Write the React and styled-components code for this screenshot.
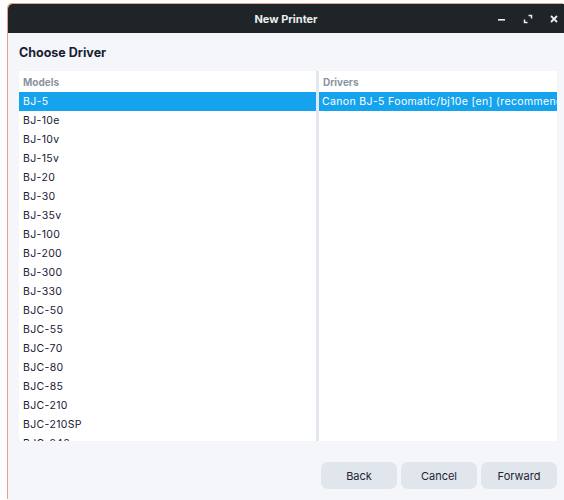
import React, { useState } from 'react';
import styled, { createGlobalStyle } from 'styled-components';

const GlobalStyle = createGlobalStyle`
  html, body {
    margin: 0;
    padding: 0;
    background: #ffffff;
    font-family: Inter, "Noto Sans", sans-serif;
  }
`;

const Desktop = styled.div`
  position: relative;
  width: 564px;
  height: 500px;
  padding: 4px 0 0 8px;
  box-sizing: border-box;
  overflow: hidden;
`;

const Window = styled.div`
  width: 556px;
  height: 496px;
  display: flex;
  flex-direction: column;
  background: #f5f6fa;
  border-top-left-radius: 5px;
  overflow: hidden;
  box-shadow: -1px -1px 0 #e9a088;
`;

const TitleBar = styled.div`
  position: relative;
  height: 29px;
  flex: none;
  display: flex;
  align-items: center;
  justify-content: center;
  background: #1e2427;
  color: #e9eef0;
  font-size: 11px;
  font-weight: 700;
`;

const Controls = styled.div`
  position: absolute;
  right: 0;
  top: 0;
  height: 29px;
  display: flex;
  align-items: center;
  gap: 8px;
  padding-right: 1px;
`;

const ControlButton = styled.button`
  width: 18px;
  height: 18px;
  padding: 0;
  border: none;
  background: transparent;
  display: flex;
  align-items: center;
  justify-content: center;
  cursor: pointer;
`;

const Body = styled.div`
  flex: 1;
  display: flex;
  flex-direction: column;
  padding: 0 7px 0 11px;
  min-height: 0;
`;

const Heading = styled.h1`
  margin: 0;
  height: 38px;
  display: flex;
  align-items: center;
  font-size: 12.5px;
  font-weight: 700;
  color: #172033;
`;

const Panel = styled.div`
  height: 370px;
  flex: none;
  display: grid;
  grid-template-columns: 297px 3px 238px;
  background: #ffffff;
  overflow: hidden;
`;

const Divider = styled.div`
  background: #e4e7ed;
`;

const Column = styled.div`
  display: flex;
  flex-direction: column;
  overflow: hidden;
  min-width: 0;
`;

const HeaderCell = styled.div`
  height: 21px;
  flex: none;
  display: flex;
  align-items: center;
  padding-left: 4px;
  font-size: 10px;
  font-weight: 700;
  color: #8a93a1;
`;

const Row = styled.div`
  height: 19px;
  flex: none;
  display: flex;
  align-items: center;
  padding-left: ${(p) => (p.$pad ? p.$pad : 4)}px;
  font-size: 10.5px;
  letter-spacing: 0.35px;
  white-space: nowrap;
  color: ${(p) => (p.$selected ? '#ffffff' : '#172033')};
  background: ${(p) => (p.$selected ? '#16a3ee' : 'transparent')};
  cursor: default;
`;

const Footer = styled.div`
  flex: 1;
  display: flex;
  justify-content: flex-end;
  align-items: flex-start;
  padding-top: 21px;
  gap: 4px;
`;

const Button = styled.button`
  width: 76px;
  height: 27px;
  border: none;
  border-radius: 7px;
  background: #e1e5ec;
  color: #1d2535;
  font-family: Inter, "Noto Sans", sans-serif;
  font-size: 11px;
  cursor: pointer;
`;

const models = [
  'BJ-5', 'BJ-10e', 'BJ-10v', 'BJ-15v', 'BJ-20', 'BJ-30', 'BJ-35v', 'BJ-100',
  'BJ-200', 'BJ-300', 'BJ-330', 'BJC-50', 'BJC-55', 'BJC-70', 'BJC-80',
  'BJC-85', 'BJC-210', 'BJC-210SP', 'BJC-240',
];

const App = () => {
  const [selected, setSelected] = useState('BJ-5');

  return (
    <>
      <GlobalStyle />
      <Desktop>
        <Window>
          <TitleBar>
            New Printer
            <Controls>
              <ControlButton aria-label="Minimize">
                <svg width="10" height="10" viewBox="0 0 10 10">
                  <rect x="1" y="5" width="7" height="1.6" fill="#e9eef0" />
                </svg>
              </ControlButton>
              <ControlButton aria-label="Maximize">
                <svg width="10" height="10" viewBox="0 0 10 10" fill="none" stroke="#e9eef0" strokeWidth="1.5">
                  <path d="M5.5 1.5h3v3" />
                  <path d="M1.5 5.5v3h3" />
                </svg>
              </ControlButton>
              <ControlButton aria-label="Close">
                <svg width="10" height="10" viewBox="0 0 10 10" stroke="#e9eef0" strokeWidth="1.8">
                  <path d="M2 2l6 6M8 2l-6 6" />
                </svg>
              </ControlButton>
            </Controls>
          </TitleBar>
          <Body>
            <Heading>Choose Driver</Heading>
            <Panel>
              <Column>
                <HeaderCell>Models</HeaderCell>
                {models.map((m) => (
                  <Row key={m} $selected={m === selected} onClick={() => setSelected(m)}>
                    {m}
                  </Row>
                ))}
              </Column>
              <Divider />
              <Column>
                <HeaderCell>Drivers</HeaderCell>
                <Row $selected $pad={3}>Canon {selected} Foomatic/bj10e [en] (recommended)</Row>
              </Column>
            </Panel>
            <Footer>
              <Button>Back</Button>
              <Button>Cancel</Button>
              <Button>Forward</Button>
            </Footer>
          </Body>
        </Window>
      </Desktop>
    </>
  );
};

export default App;
